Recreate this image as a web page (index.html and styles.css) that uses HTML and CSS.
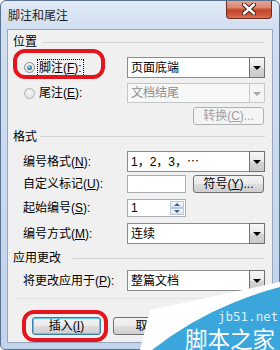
FILE: index.html
```html
<!DOCTYPE html>
<html lang="zh-CN">
<head>
<meta charset="UTF-8" />
<title>脚注和尾注</title>
<link rel="stylesheet" href="styles.css">
</head>
<body>
<div class="screen">
  <div class="window">
    <div class="titlebar">
      <span class="title">脚注和尾注</span>
      <span class="close">
        <svg width="14" height="12" viewBox="0 0 14 12">
          <path d="M2 1.5 L12 10.5 M12 1.5 L2 10.5" stroke="#4a1a10" stroke-width="4.4" stroke-linecap="round" />
          <path d="M2 1.5 L12 10.5 M12 1.5 L2 10.5" stroke="#fff" stroke-width="2.4" stroke-linecap="round" />
        </svg>
      </span>
    </div>

    <div class="client">
      <div class="section s-pos"><span>位置</span><i class="rule"></i></div>

      <div class="row radio-row r1">
        <div class="lbl">
          <span class="radio on"></span>
          <span class="focus">脚注(<u>F</u>):</span>
        </div>
        <div class="combo"><span class="val">页面底端</span><b class="drop"></b></div>
      </div>

      <div class="row radio-row r2">
        <div class="lbl">
          <span class="radio"></span>
          <span class="txt">尾注(<u>E</u>):</span>
        </div>
        <div class="combo disabled"><span class="val">文档结尾</span><b class="drop"></b></div>
      </div>

      <div class="row convert-row">
        <span class="btn disabled">转换(<u>C</u>)...</span>
      </div>

      <div class="section s-fmt"><span>格式</span><i class="rule"></i></div>

      <div class="row f1">
        <span class="lbl">编号格式(<u>N</u>):</span>
        <div class="combo"><span class="val">1，2，3，⋯</span><b class="drop"></b></div>
      </div>

      <div class="row f2">
        <span class="lbl">自定义标记(<u>U</u>):</span>
        <span class="textbox"></span>
        <span class="btn">符号(<u>Y</u>)...</span>
      </div>

      <div class="row f3">
        <span class="lbl">起始编号(<u>S</u>):</span>
        <div class="spin">
          <span class="val">1</span>
          <span class="spin-btns"><i class="up"></i><i class="down"></i></span>
        </div>
      </div>

      <div class="row f4">
        <span class="lbl">编号方式(<u>M</u>):</span>
        <div class="combo"><span class="val">连续</span><b class="drop"></b></div>
      </div>

      <div class="section s-apply"><span>应用更改</span><i class="rule"></i></div>

      <div class="row a1">
        <span class="lbl">将更改应用于(<u>P</u>):</span>
        <div class="combo"><span class="val">整篇文档</span><b class="drop"></b></div>
      </div>

      <div class="separator"></div>

      <div class="actions">
        <span class="btn default">插入(<u>I</u>)</span>
        <span class="btn">取消</span>
      </div>
    </div>
  </div>

  <!-- annotations drawn over the dialog -->
  <div class="mark mark-1"></div>
  <div class="mark mark-2"></div>

  <div class="watermark">
    <svg width="140" height="70" viewBox="0 0 140 70">
      <path d="M10 30 L140 2 L140 70 L0 70 Z" fill="#fff" />
      <path d="M12 70 Q50 40 95 22 Q120 12 140 7 L140 70 Z" fill="#3aa6dc" />
    </svg>
    <span class="wm-url">jb51.net</span>
    <span class="wm-name">脚本之家</span>
  </div>
</div>
</body>
</html>
```

FILE: styles.css
```css
* {
  box-sizing: border-box;
}
body {
  margin: 0;
  font-family: "Liberation Sans", "Noto Sans CJK SC", sans-serif;
  font-size: 12px;
  color: #000;
}
u {
  text-decoration: underline;
}
.screen {
  position: relative;
  width: 280px;
  height: 350px;
  overflow: hidden;
}

/* Window frame */
.window {
  width: 280px;
  height: 350px;
  border: 1px solid #5b7291;
  border-radius: 6px 6px 5px 5px;
  background: linear-gradient(180deg, #e2ebf6 0, #d0def0 28px, #c2d4eb 100%);
  overflow: hidden;
}
.titlebar {
  height: 28px;
  display: flex;
  justify-content: space-between;
  align-items: center;
  padding: 0 7px;
}
.title {
  line-height: 14px;
  color: #1b1b1b;
  margin-top: 1px;
}
.close {
  align-self: flex-start;
  width: 46px;
  height: 19px;
  margin-top: -1px;
  border: 1px solid #6b2a1d;
  border-top: none;
  border-radius: 0 0 4px 4px;
  background: linear-gradient(180deg, #e9a898 0, #da8670 42%, #c2462d 55%, #cc5a3c 85%, #d8775a 100%);
  display: flex;
  align-items: center;
  justify-content: center;
}

/* Client area */
.client {
  height: 314px;
  margin: 0 6px;
  border: 1px solid #97a7bd;
  background: #f0f0f0;
  padding: 0 7px 0 5px;
  display: flex;
  flex-direction: column;
}
.section {
  height: 14px;
  display: flex;
  align-items: center;
  line-height: 14px;
}
.section .rule {
  flex: 1;
  height: 1px;
  margin-left: 4px;
  background: #d5d5d5;
}
.s-pos { margin-top: 5px; }
.s-pos .rule { margin-left: 5px; margin-top: 1px; }
.s-fmt { margin-top: 5px; }
.s-fmt .rule { margin-left: 3px; margin-top: -2px; }
.s-apply { margin-top: 7px; }
.s-apply .rule { margin-left: 12px; }

.row {
  display: flex;
  align-items: center;
  padding-left: 10px;
  line-height: 14px;
}
.row .lbl {
  width: 104px;
  flex: none;
  display: flex;
  align-items: center;
}
.radio-row {
  padding-left: 11px;
}
.radio-row .lbl {
  width: 103px;
}
.r1 { margin-top: 8px; height: 21px; }
.r2 { margin-top: 5px; height: 20px; }
.convert-row { margin-top: 4px; height: 18px; justify-content: flex-end; padding-right: 1px; }
.f1 { margin-top: 7px; height: 21px; }
.f2 { margin-top: 3px; height: 18px; }
.f3 { margin-top: 6px; height: 18px; }
.f4 { margin-top: 6px; height: 21px; }
.a1 { margin-top: 5px; height: 21px; }

/* Radio buttons */
.radio {
  width: 11px;
  height: 11px;
  border-radius: 50%;
  border: 1px solid #8b8e90;
  background: radial-gradient(circle at 50% 40%, #fdfdfd, #d9d9d9);
  display: flex;
  align-items: center;
  justify-content: center;
  margin-right: 3px;
}
.radio.on::after {
  content: "";
  width: 5px;
  height: 5px;
  border-radius: 50%;
  background: radial-gradient(circle at 40% 35%, #9fdcfa, #1f63a6 75%);
}
.radio:not(.on) {
  border-color: #b0b3b5;
  background: radial-gradient(circle at 50% 40%, #f6f6f6, #dcdcdc);
}
.focus {
  outline: 1px dotted #000;
  outline-offset: 0;
  padding: 1px 1px;
}
.txt {
  padding: 1px 1px;
}

/* Combo boxes */
.combo {
  flex: 1;
  height: 100%;
  display: flex;
  align-items: stretch;
  background: #fff;
  border: 1px solid #8a8c8e;
}
.combo .val {
  flex: 1;
  padding-left: 3px;
  display: flex;
  align-items: center;
}
.drop {
  width: 16px;
  border: 1px solid #707070;
  margin: -1px -1px -1px 0;
  background: linear-gradient(180deg, #f7f7f7 0, #e9e9e9 50%, #d5d5d5 51%, #cacaca 100%);
  display: flex;
  align-items: center;
  justify-content: center;
}
.drop::after {
  content: "";
  border-left: 4px solid transparent;
  border-right: 4px solid transparent;
  border-top: 4px solid #000;
  margin-top: 1px;
}
.combo.disabled {
  background: #f7f7f7;
  border-color: #c3c5c7;
  color: #8e8e8e;
}
.combo.disabled .drop {
  border-color: #c8c8c8;
  background: #f4f4f4;
}
.combo.disabled .drop::after {
  border-top-color: #a8a8a8;
}

/* Text box and spinner */
.textbox {
  width: 59px;
  height: 100%;
  border: 1px solid #a9acb0;
  background: #fff;
  margin-right: 7px;
}
.spin {
  width: 59px;
  height: 100%;
  border: 1px solid #a9acb0;
  background: #fff;
  display: flex;
}
.spin .val {
  flex: 1;
  padding-left: 3px;
  display: flex;
  align-items: center;
}
.spin-btns {
  width: 15px;
  display: flex;
  flex-direction: column;
  padding: 1px 1px 1px 0;
}
.spin-btns i {
  flex: 1;
  background: linear-gradient(180deg, #f3f7fc, #d8e4f1);
  border: 1px solid #b9c8da;
  display: flex;
  align-items: center;
  justify-content: center;
}
.spin-btns .up::after {
  content: "";
  border-left: 3px solid transparent;
  border-right: 3px solid transparent;
  border-bottom: 3px solid #4a5d7a;
}
.spin-btns .down::after {
  content: "";
  border-left: 3px solid transparent;
  border-right: 3px solid transparent;
  border-top: 3px solid #4a5d7a;
}

/* Push buttons */
.btn {
  width: 71px;
  height: 18px;
  border: 1px solid #707070;
  border-radius: 3px;
  background: linear-gradient(180deg, #f3f3f3 0, #ebebeb 48%, #dddddd 52%, #cfcfcf 100%);
  display: flex;
  align-items: center;
  justify-content: center;
  line-height: 14px;
}
.btn.disabled {
  border-color: #adb2b5;
  background: #f4f4f4;
  color: #a0a0a0;
}
.btn.default {
  border-color: #3c7fb1;
  box-shadow: inset 0 0 0 1px #5ec7f5;
}
.separator {
  height: 1px;
  margin-top: 7px;
  background: #e2e2e2;
}
.actions {
  display: flex;
  gap: 12px;
  margin-top: 18px;
  padding-left: 19px;
}
.actions .btn {
  width: 69px;
}

/* Annotations */
.mark {
  position: absolute;
  border: 4px solid #e3161d;
  border-radius: 12px;
}
.mark-1 {
  left: 13px;
  top: 49px;
  width: 92px;
  height: 30px;
}
.mark-2 {
  left: 22px;
  top: 310px;
  width: 86px;
  height: 32px;
}
.watermark {
  position: absolute;
  left: 140px;
  top: 280px;
  width: 140px;
  height: 70px;
}
.watermark svg {
  display: block;
}
.wm-url {
  position: absolute;
  left: 78px;
  top: 30px;
  font-family: "DejaVu Sans Mono", monospace;
  font-size: 12.5px;
  line-height: 13px;
  color: #dcf0fb;
}
.wm-name {
  position: absolute;
  left: 45px;
  top: 47px;
  font-family: "Noto Sans CJK SC", sans-serif;
  font-size: 22.5px;
  line-height: 22px;
  color: #fff;
  white-space: nowrap;
}
```
